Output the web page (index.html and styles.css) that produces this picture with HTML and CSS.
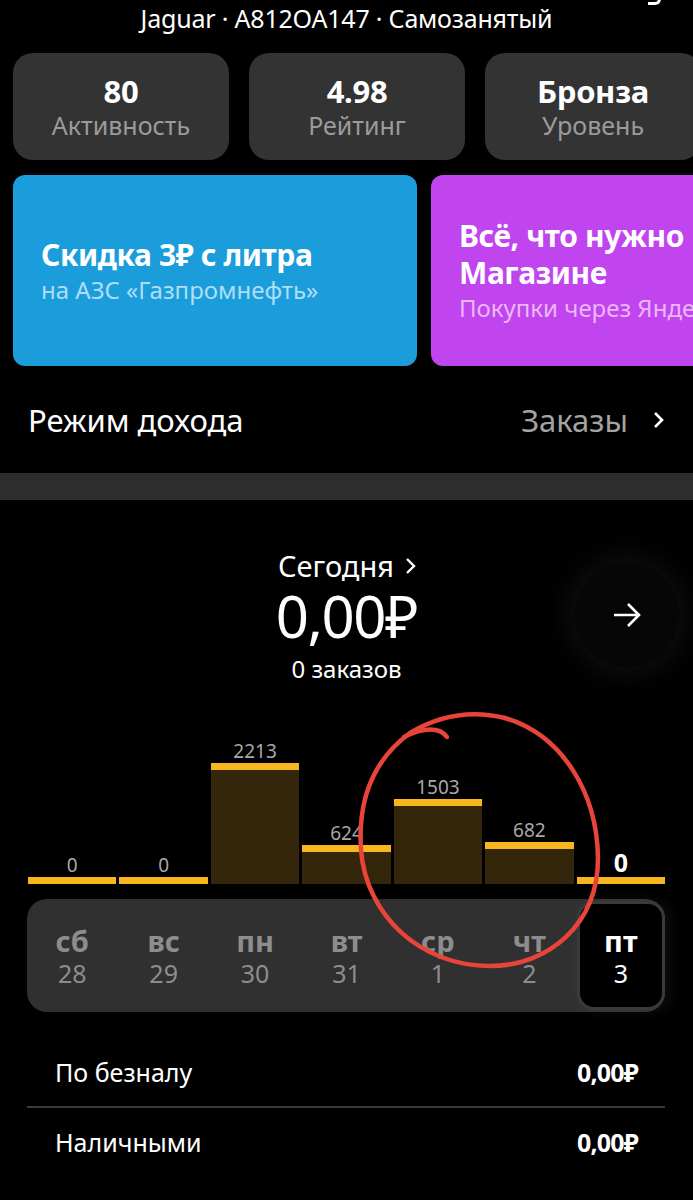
FILE: index.html
```html
<!DOCTYPE html>
<html lang="ru">
<head>
    <meta charset="UTF-8">
    <meta name="viewport" content="width=device-width, initial-scale=1.0">
    <title>Доход</title>
    <link rel="stylesheet" href="styles.css">
</head>
<body>
    <div class="screen">
        <!-- Header -->
        <div class="header">
            <span class="car">Jaguar · A812OA147 · Самозанятый</span>
            <span class="header-icon"></span>
        </div>

        <!-- Stats -->
        <div class="stats">
            <div class="stat"><b>80</b><span>Активность</span></div>
            <div class="stat"><b>4.98</b><span>Рейтинг</span></div>
            <div class="stat"><b>Бронза</b><span>Уровень</span></div>
        </div>

        <!-- Promo cards -->
        <div class="promos">
            <div class="promo promo-blue">
                <div class="promo-title">Скидка 3₽ с литра</div>
                <div class="promo-sub">на АЗС «Газпромнефть»</div>
            </div>
            <div class="promo promo-purple">
                <div class="promo-title">Всё, что нужно в<br>Магазине</div>
                <div class="promo-sub">Покупки через Яндекс Про</div>
            </div>
        </div>

        <!-- Income mode -->
        <div class="mode-row">
            <span class="mode-title">Режим дохода</span>
            <span class="mode-value">Заказы
                <svg class="chev" width="14" height="20" viewBox="0 0 14 20"><path d="M3 3 L10 10 L3 17" fill="none" stroke="#fff" stroke-width="2.6"/></svg>
            </span>
        </div>

        <div class="band"></div>

        <!-- Today -->
        <div class="today">
            <div class="today-title">Сегодня
                <svg width="14" height="20" viewBox="0 0 14 20"><path d="M3 3 L10 10 L3 17" fill="none" stroke="#fff" stroke-width="2.4"/></svg>
            </div>
            <div class="today-sum">0,00₽</div>
            <div class="today-orders">0 заказов</div>
            <div class="round-btn">
                <svg width="30" height="26" viewBox="0 0 30 26"><path d="M2 13 H27 M16 2 L27 13 L16 24" fill="none" stroke="#fff" stroke-width="2.6"/></svg>
            </div>
        </div>

        <!-- Chart -->
        <div class="chart">
            <div class="col"><span class="val">0</span><div class="bar" style="height:7px"></div></div>
            <div class="col"><span class="val">0</span><div class="bar" style="height:7px"></div></div>
            <div class="col"><span class="val">2213</span><div class="bar" style="height:121px"></div></div>
            <div class="col"><span class="val">624</span><div class="bar" style="height:39px"></div></div>
            <div class="col"><span class="val">1503</span><div class="bar" style="height:85px"></div></div>
            <div class="col"><span class="val">682</span><div class="bar" style="height:42px"></div></div>
            <div class="col"><span class="val val-today">0</span><div class="bar" style="height:7px"></div></div>
        </div>

        <!-- Days -->
        <div class="days">
            <div class="day"><b>сб</b><span>28</span></div>
            <div class="day"><b>вс</b><span>29</span></div>
            <div class="day"><b>пн</b><span>30</span></div>
            <div class="day"><b>вт</b><span>31</span></div>
            <div class="day"><b>ср</b><span>1</span></div>
            <div class="day"><b>чт</b><span>2</span></div>
            <div class="day day-active"><b>пт</b><span>3</span></div>
        </div>

        <!-- Payment rows -->
        <div class="pay-list">
            <div class="pay-row"><span>По безналу</span><b>0,00₽</b></div>
            <div class="pay-row"><span>Наличными</span><b>0,00₽</b></div>
        </div>

        <!-- Hand-drawn mark over the screenshot -->
        <svg class="scribble" width="693" height="1200" viewBox="0 0 693 1200">
            <path d="M447 737 C440 727, 424 727, 404 737" />
            <path d="M410 733 C440 715, 472 710, 505 718 C562 735, 597 792, 598 858 C598 925, 548 966, 490 966 C420 966, 366 915, 361 850 C357 790, 380 755, 410 733" />
        </svg>
    </div>
</body>
</html>
```

FILE: styles.css
```css
body {
    margin: 0;
    background: #000;
    color: #fff;
    font-family: "Noto Sans", "DejaVu Sans", sans-serif;
}
.screen {
    position: relative;
    width: 693px;
    height: 1200px;
    overflow: hidden;
}

/* Header */
.header {
    height: 40px;
    display: flex;
    justify-content: center;
    align-items: flex-start;
}
.car { font-size: 25px; line-height: 36px; letter-spacing: -0.2px; }
.header-icon {
    position: absolute;
    top: -8px;
    right: 32px;
    width: 10px;
    height: 10px;
    border-right: 3px solid #fff;
    border-bottom: 3px solid #fff;
    border-radius: 0 0 6px 0;
}

/* Stats */
.stats {
    display: grid;
    grid-template-columns: repeat(3, 216px);
    gap: 20px;
    padding: 13px 0 0 13px;
}
.stat {
    height: 107px;
    background: #333333;
    border-radius: 20px;
    display: flex;
    flex-direction: column;
    align-items: center;
    justify-content: center;
}
.stat b { font-size: 31px; line-height: 36px; letter-spacing: -0.3px; }
.stat span { font-size: 25px; line-height: 32px; color: #9b9b9b; }

/* Promo */
.promos {
    display: flex;
    gap: 14px;
    padding: 15px 0 0 13px;
}
.promo {
    flex: none;
    height: 191px;
    border-radius: 12px;
    padding: 0 28px;
    box-sizing: border-box;
    display: flex;
    flex-direction: column;
    justify-content: center;
    white-space: nowrap;
}
.promo-blue { width: 404px; background: #1b9ddc; }
.promo-purple { width: 404px; background: #c045ee; }
.promo-title { font-size: 30px; font-weight: bold; line-height: 37px; letter-spacing: -0.4px; }
.promo-sub { font-size: 24px; line-height: 33px; }
.promo-blue .promo-sub { color: #aedef6; }
.promo-purple .promo-sub { color: #ecb6fb; }

/* Income mode */
.mode-row {
    height: 107px;
    display: flex;
    align-items: center;
    justify-content: space-between;
    padding: 0 27px 0 28px;
}
.mode-title { font-size: 31px; }
.mode-value {
    font-size: 31px;
    color: #a3a3a3;
    display: flex;
    align-items: center;
    gap: 24px;
}
.band { height: 27px; background: #2d2d2d; }

/* Today */
.today {
    position: relative;
    display: flex;
    flex-direction: column;
    align-items: center;
    padding-top: 48px;
    height: 192px;
    box-sizing: border-box;
}
.today-title {
    font-size: 29px;
    line-height: 36px;
    display: flex;
    align-items: center;
    gap: 10px;
    margin-left: 3px;
}
.today-sum { font-size: 58px; line-height: 64px; letter-spacing: -1.5px; }
.today-orders { font-size: 24px; line-height: 30px; margin-top: 6px; }
.round-btn {
    position: absolute;
    top: 63px;
    right: 14px;
    width: 104px;
    height: 104px;
    border-radius: 50%;
    background: #060606;
    box-shadow: 0 0 30px 8px rgba(255, 255, 255, 0.06);
    display: flex;
    align-items: center;
    justify-content: center;
}

/* Chart */
.chart {
    display: grid;
    grid-template-columns: repeat(7, 1fr);
    gap: 3px;
    padding: 0 28px;
    height: 192px;
    align-items: end;
}
.col {
    display: flex;
    flex-direction: column;
    align-items: center;
}
.val {
    font-size: 19px;
    line-height: 24px;
    color: #a8a8a8;
}
.val-today { font-size: 25px; font-weight: bold; color: #fff; line-height: 30px; }
.bar {
    width: 100%;
    background: #33260b;
    border-top: 7px solid #f8b51d;
    box-sizing: border-box;
}

/* Days */
.days {
    margin: 15px 28px 0 27px;
    height: 113px;
    background: #303030;
    border-radius: 20px;
    display: grid;
    grid-template-columns: repeat(7, 1fr);
    gap: 3px;
    padding: 0 0 0 1px;
    align-items: center;
}
.day {
    display: flex;
    flex-direction: column;
    align-items: center;
    color: #8d8d8d;
}
.day b { font-size: 29px; line-height: 34px; }
.day span { font-size: 25px; line-height: 30px; }
.day-active {
    height: 109px;
    justify-content: center;
    background: #000;
    color: #fff;
    border: 3px solid #3a3a3a;
    border-radius: 17px;
    box-sizing: border-box;
    box-shadow: 4px 0 14px rgba(255, 255, 255, 0.07);
}

/* Payment rows */
.pay-list { margin: 26px 28px 0 27px; }
.pay-row {
    height: 68px;
    display: flex;
    align-items: center;
    justify-content: space-between;
    padding: 0 27px 0 28px;
    font-size: 25px;
}
.pay-row + .pay-row { border-top: 2px solid #3a3a3a; }
.pay-row b { font-size: 25px; letter-spacing: -0.8px; }

/* Overlay annotation */
.scribble {
    position: absolute;
    top: 0;
    left: 0;
    pointer-events: none;
}
.scribble path {
    fill: none;
    stroke: #e8443a;
    stroke-width: 4.5;
    stroke-linecap: round;
}
```
